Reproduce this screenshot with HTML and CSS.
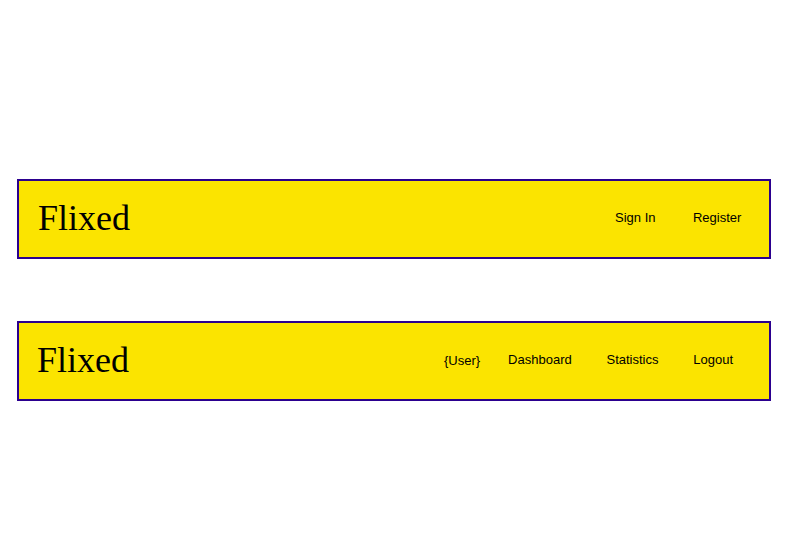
FILE: index.html
```html
<!DOCTYPE html>
<html>
<head>
<meta charset="utf-8">
<link rel="stylesheet" href="styles.css">
</head>
<body>
<div class="page">
  <header class="bar bar-guest">
    <div class="logo">Flixed</div>
    <nav class="nav">
      <a class="link">Sign In</a>
      <a class="link">Register</a>
    </nav>
  </header>
  <header class="bar bar-user">
    <div class="logo">Flixed</div>
    <nav class="nav">
      <span class="user">{User}</span>
      <a class="link">Dashboard</a>
      <a class="link">Statistics</a>
      <a class="link">Logout</a>
    </nav>
  </header>
</div>
</body>
</html>
```
FILE: styles.css
```css
html, body {
  margin: 0;
  padding: 0;
  background: #ffffff;
}
.page {
  display: flex;
  flex-direction: column;
  gap: 62px;
  padding: 179px 0 0 17px;
}
.bar {
  box-sizing: border-box;
  width: 754px;
  height: 80px;
  border: 2px solid #2b008f;
  background: #fbe400;
  display: flex;
  align-items: center;
  justify-content: space-between;
}
.logo {
  font-family: "Liberation Serif", "Times New Roman", serif;
  font-size: 36px;
  color: #000;
  padding-left: 19px;
  padding-bottom: 3px;
}
.bar-user .logo {
  padding-left: 18px;
}
.nav {
  display: flex;
  align-items: center;
  font-family: "Liberation Sans", Arial, sans-serif;
  font-size: 13px;
  color: #000;
}
.link {
  padding-bottom: 4px;
}
.user {
  padding-bottom: 2px;
}
.bar-guest .nav {
  gap: 37.5px;
  padding-right: 27.6px;
}
.bar-user .nav {
  gap: 34.75px;
  padding-right: 36px;
}
.user {
  margin-right: -6.75px;
}
```
